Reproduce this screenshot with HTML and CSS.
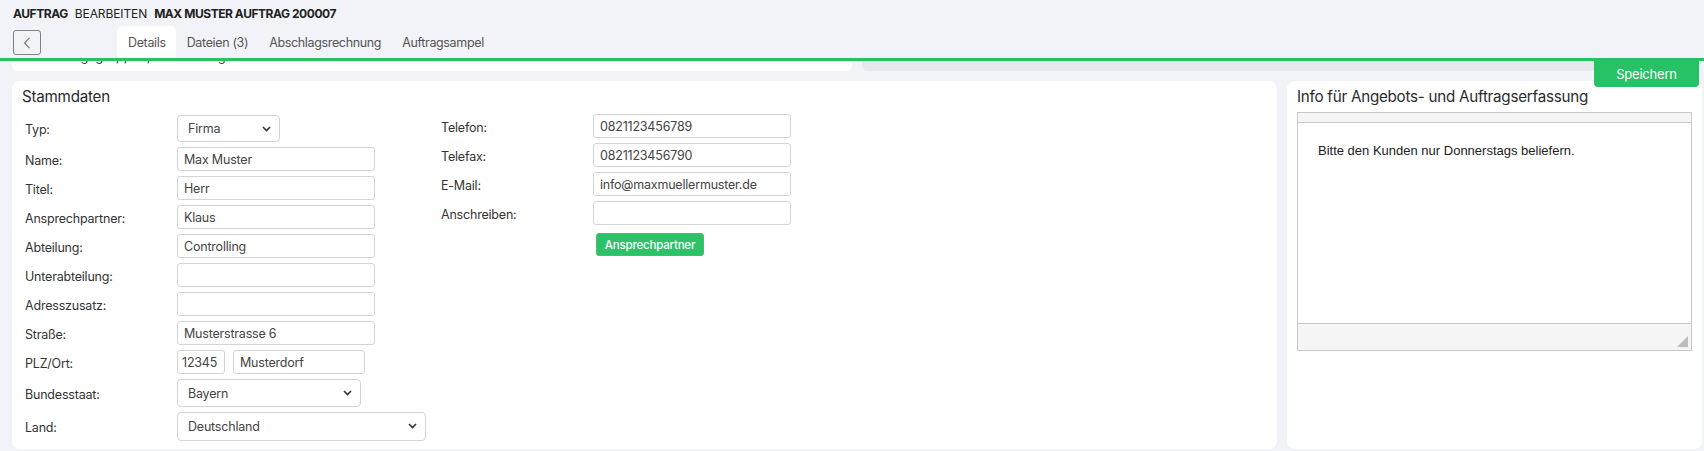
FILE: index.html
```html
<!DOCTYPE html>
<html lang="de">
<head>
    <meta charset="UTF-8">
    <meta name="viewport" content="width=device-width, initial-scale=1.0">
    <title>Auftrag bearbeiten</title>
    <link rel="stylesheet" href="styles.css">
</head>
<body>
    <header class="topbar">
        <div class="page-title">
            <b>AUFTRAG</b>
            <span>BEARBEITEN</span>
            <b>MAX MUSTER AUFTRAG 200007</b>
        </div>
        <div class="tabbar">
            <button class="back-button" title="Zurück">
                <svg width="8" height="12" viewBox="0 0 8 12"><path d="M6.5 0.8 L1.5 6 L6.5 11.2" fill="none" stroke="#7a7a7a" stroke-width="1.2"/></svg>
            </button>
            <nav class="tabs">
                <a class="tab active">Details</a>
                <a class="tab">Dateien (3)</a>
                <a class="tab">Abschlagsrechnung</a>
                <a class="tab">Auftragsampel</a>
            </nav>
        </div>
    </header>

    <div class="scrolled-row">
        <div class="stub stub-white"><span class="stub-text">Auftragsgruppe: per Liefertag</span></div>
        <div class="stub stub-gray"></div>
    </div>

    <button class="save-button">Speichern</button>

    <main class="content">
        <section class="card">
            <h2 class="card-title">Stammdaten</h2>
            <div class="form-columns">
                <div class="form-grid">
                    <label>Typ:</label>
                    <div class="select-wrap w-typ">
                        <select><option>Firma</option><option>Privat</option></select>
                        <svg class="chevron" width="9" height="6" viewBox="0 0 9 6"><path d="M1 1 L4.5 4.5 L8 1" fill="none" stroke="#333" stroke-width="1.6"/></svg>
                    </div>

                    <label>Name:</label>
                    <input type="text" value="Max Muster">

                    <label>Titel:</label>
                    <input type="text" value="Herr">

                    <label>Ansprechpartner:</label>
                    <input type="text" value="Klaus">

                    <label>Abteilung:</label>
                    <input type="text" value="Controlling">

                    <label>Unterabteilung:</label>
                    <input type="text" value="">

                    <label>Adresszusatz:</label>
                    <input type="text" value="">

                    <label>Straße:</label>
                    <input type="text" value="Musterstrasse 6">

                    <label>PLZ/Ort:</label>
                    <div class="plz-ort">
                        <input type="text" class="plz" value="12345">
                        <input type="text" class="ort" value="Musterdorf">
                    </div>

                    <label>Bundesstaat:</label>
                    <div class="select-wrap w-state">
                        <select><option>Bayern</option><option>Hessen</option></select>
                        <svg class="chevron" width="9" height="6" viewBox="0 0 9 6"><path d="M1 1 L4.5 4.5 L8 1" fill="none" stroke="#333" stroke-width="1.6"/></svg>
                    </div>

                    <label>Land:</label>
                    <div class="select-wrap w-country">
                        <select><option>Deutschland</option><option>Österreich</option></select>
                        <svg class="chevron" width="9" height="6" viewBox="0 0 9 6"><path d="M1 1 L4.5 4.5 L8 1" fill="none" stroke="#333" stroke-width="1.6"/></svg>
                    </div>
                </div>

                <div class="form-grid">
                    <label>Telefon:</label>
                    <input type="text" value="0821123456789">

                    <label>Telefax:</label>
                    <input type="text" value="0821123456790">

                    <label>E-Mail:</label>
                    <input type="text" value="info@maxmuellermuster.de">

                    <label>Anschreiben:</label>
                    <input type="text" value="">

                    <span></span>
                    <div><button class="contact-button">Ansprechpartner</button></div>
                </div>
            </div>
        </section>

        <section class="card info-card">
            <h2 class="card-title">Info für Angebots- und Auftragserfassung</h2>
            <div class="editor">
                <div class="editor-toolbar"></div>
                <div class="editor-body">
                    <p>Bitte den Kunden nur Donnerstags beliefern.</p>
                </div>
                <div class="editor-status"><span class="resize-grip"></span></div>
            </div>
        </section>
    </main>
</body>
</html>
```

FILE: styles.css
```css
body {
    margin: 0;
    background-color: #f2f3f8;
    font-family: Inter, "Noto Sans", sans-serif;
    font-size: 13px;
    color: #333;
    position: relative;
}
.page-title {
    display: flex;
    gap: 7px;
    padding: 6px 0 0 13px;
    height: 15px;
    line-height: 15px;
    font-size: 12px;
    color: #222;
}
.page-title b {
    font-weight: 700;
    letter-spacing: -0.45px;
}
.page-title span {
    letter-spacing: -0.1px;
}
.tabbar {
    display: flex;
    align-items: flex-end;
    height: 37px;
    border-bottom: 3px solid #27c166;
}
.back-button {
    box-sizing: border-box;
    width: 28px;
    height: 25px;
    margin: 0 0 3px 13px;
    padding: 0;
    background: transparent;
    border: 1px solid #808080;
    border-radius: 3px;
    display: flex;
    align-items: center;
    justify-content: center;
    cursor: pointer;
}
.tabs {
    display: flex;
    margin-left: 76px;
}
.tab {
    height: 32px;
    line-height: 33px;
    padding: 0 10px 0 11px;
    font-size: 12.5px;
    letter-spacing: -0.35px;
    color: #555;
    border-radius: 6px 6px 0 0;
    cursor: pointer;
}
.tab.active {
    background-color: #fff;
}
.scrolled-row {
    display: flex;
    gap: 10px;
    margin: 0 3px 0 12px;
    height: 10px;
}
.stub {
    flex: 1;
    border-radius: 0 0 6px 6px;
    overflow: hidden;
}
.stub-white {
    background-color: #fff;
}
.stub-gray {
    background-color: #e6e8ee;
}
.stub-text {
    display: block;
    margin: -13px 0 0 31px;
    line-height: 16px;
    color: #444;
}
.save-button {
    position: absolute;
    top: 61px;
    right: 5px;
    width: 105px;
    height: 26px;
    border: none;
    border-radius: 0 0 4px 4px;
    background-color: #27c166;
    color: #fff;
    font-family: Inter, sans-serif;
    font-size: 13px;
    letter-spacing: -0.2px;
    cursor: pointer;
}
.content {
    display: grid;
    grid-template-columns: 1fr 415px;
    gap: 10px;
    margin: 10px 2px 0 12px;
}
.card {
    background-color: #fff;
    border-radius: 8px;
    padding: 6px 10px 7px 10px;
    min-height: 355px;
}
.card-title {
    margin: 0;
    font-size: 15.2px;
    font-weight: 400;
    line-height: 20px;
    letter-spacing: -0.25px;
    color: #2b2b2b;
}
.form-columns {
    display: flex;
    margin-top: 8px;
    padding-left: 3px;
}
.form-grid {
    display: grid;
    grid-template-columns: 152px auto;
    row-gap: 5px;
    align-items: center;
    align-content: start;
    width: 416px;
}
.form-grid:last-child {
    margin-top: -1px;
}
.form-grid label {
    padding-top: 2px;
    font-size: 12.5px;
    letter-spacing: -0.2px;
    color: #333;
}
.form-grid input {
    box-sizing: border-box;
    width: 198px;
    height: 24px;
    padding: 0 6px;
    border: 1px solid #d4d4d4;
    border-radius: 3px;
    font-family: Inter, sans-serif;
    font-size: 12.5px;
    letter-spacing: -0.2px;
    color: #444;
}
.plz-ort {
    display: flex;
    gap: 8px;
}
.form-grid .plz {
    width: 48px;
    padding: 0 4px;
}
.form-grid .ort {
    width: 132px;
}
.select-wrap {
    position: relative;
}
.select-wrap select {
    box-sizing: border-box;
    width: 100%;
    height: 28px;
    padding: 0 10px;
    border: 1px solid #d4d4d4;
    border-radius: 4px;
    background-color: #fff;
    font-family: Inter, sans-serif;
    font-size: 12.5px;
    letter-spacing: -0.2px;
    color: #444;
    appearance: none;
    -webkit-appearance: none;
}
.select-wrap .chevron {
    position: absolute;
    right: 9px;
    top: 11px;
    pointer-events: none;
}
.w-typ {
    width: 103px;
}
.w-typ select {
    height: 27px;
}
.w-state {
    width: 184px;
}
.w-country {
    width: 249px;
}
.w-country select {
    height: 29px;
}
.contact-button {
    margin: 3px 0 0 3px;
    width: 108px;
    height: 23px;
    border: 1px solid #52b968;
    border-radius: 3px;
    background-color: #2cc269;
    color: #fff;
    font-family: Inter, sans-serif;
    font-size: 11.5px;
    font-weight: 500;
    letter-spacing: -0.2px;
    cursor: pointer;
}
.info-card {
    display: flex;
    flex-direction: column;
}
.editor {
    margin-top: 5px;
    border: 1px solid #c8c8c8;
    width: 395px;
    box-sizing: border-box;
}
.editor-toolbar {
    height: 9px;
    background-color: #f5f5f5;
    border-bottom: 1px solid #c8c8c8;
}
.editor-body {
    height: 200px;
    padding: 0 20px;
    overflow: hidden;
}
.editor-body p {
    margin: 20px 0 0 0;
    font-family: "Liberation Sans", Arial, sans-serif;
    font-size: 13px;
    line-height: 16px;
    color: #222;
}
.editor-status {
    position: relative;
    height: 26px;
    background-color: #f5f5f5;
    border-top: 1px solid #c8c8c8;
}
.resize-grip {
    position: absolute;
    right: 3px;
    bottom: 3px;
    width: 0;
    height: 0;
    border-left: 11px solid transparent;
    border-bottom: 11px solid #bdbdbd;
}
```
